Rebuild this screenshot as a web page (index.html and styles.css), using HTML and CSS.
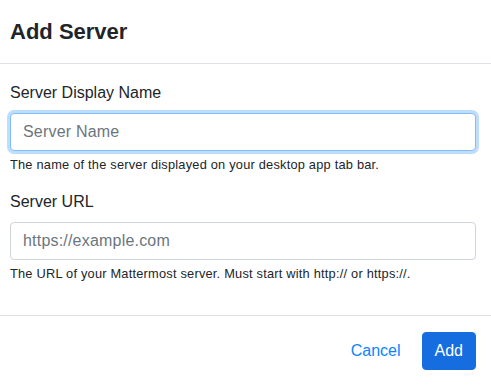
FILE: index.html
```html
<!DOCTYPE html>
<html lang="en">
<head>
    <meta charset="UTF-8">
    <title>Add Server</title>
    <link rel="stylesheet" href="styles.css">
</head>
<body>
<div class="modal-content">
    <div class="modal-header">
        <h5 class="modal-title">Add Server</h5>
    </div>
    <div class="modal-body">
        <div class="form-group">
            <label class="form-label" for="serverName">Server Display Name</label>
            <input class="form-control focused" id="serverName" type="text" placeholder="Server Name">
            <div class="form-text">The name of the server displayed on your desktop app tab bar.</div>
        </div>
        <div class="form-group">
            <label class="form-label" for="serverUrl">Server URL</label>
            <input class="form-control" id="serverUrl" type="text" placeholder="https://example.com">
            <div class="form-text">The URL of your Mattermost server. Must start with http:// or https://.</div>
        </div>
    </div>
    <div class="modal-footer">
        <button class="btn btn-link">Cancel</button>
        <button class="btn btn-primary">Add</button>
    </div>
</div>
</body>
</html>
```

FILE: styles.css
```css
*{
    box-sizing: border-box;
}
body{
    margin: 0;
    background: #ffffff;
    color: #212529;
    font-family: "Liberation Sans", Arial, sans-serif;
    font-size: 16px;
    line-height: 1.5;
}
.modal-content{
    width: 100%;
    background: #ffffff;
}
.modal-header{
    padding: 17px 15px 16px 10px;
    border-bottom: 1px solid #dee2e6;
}
.modal-title{
    margin: 0;
    font-size: 22px;
    font-weight: 700;
    line-height: 30px;
}
.modal-body{
    padding: 17px 15px 16px 10px;
}
.form-group{
    margin-bottom: 16px;
}
.form-label{
    display: inline-block;
    margin-bottom: 8px;
}
.form-control{
    display: block;
    width: 100%;
    height: 38px;
    padding: 6px 12px;
    font-family: inherit;
    font-size: 16px;
    line-height: 1.5;
    color: #495057;
    background: #ffffff;
    border: 1px solid #ced4da;
    border-radius: 4px;
    outline: none;
}
.form-control::placeholder{
    color: #6c757d;
    letter-spacing: 0.2px;
}
.form-control.focused{
    border-color: #80bdff;
    box-shadow: 0 0 0 3px rgba(0, 123, 255, 0.25);
}
.form-text{
    margin-top: 4px;
    font-size: 12.8px;
    line-height: 1.5;
    letter-spacing: 0.22px;
    color: #212529;
}
.modal-footer{
    display: flex;
    justify-content: flex-end;
    align-items: center;
    padding: 12px 11px 12px 6px;
    border-top: 1px solid #dee2e6;
}
.btn{
    margin: 4px;
    height: 38px;
    padding: 6px 12px;
    font-family: inherit;
    font-size: 16px;
    line-height: 1.5;
    border: 1px solid transparent;
    border-radius: 4px;
    background: none;
    cursor: pointer;
}
.btn-link{
    color: #0b84ff;
}
.btn-primary{
    color: #ffffff;
    background: #166de0;
    border-color: #166de0;
}
```
